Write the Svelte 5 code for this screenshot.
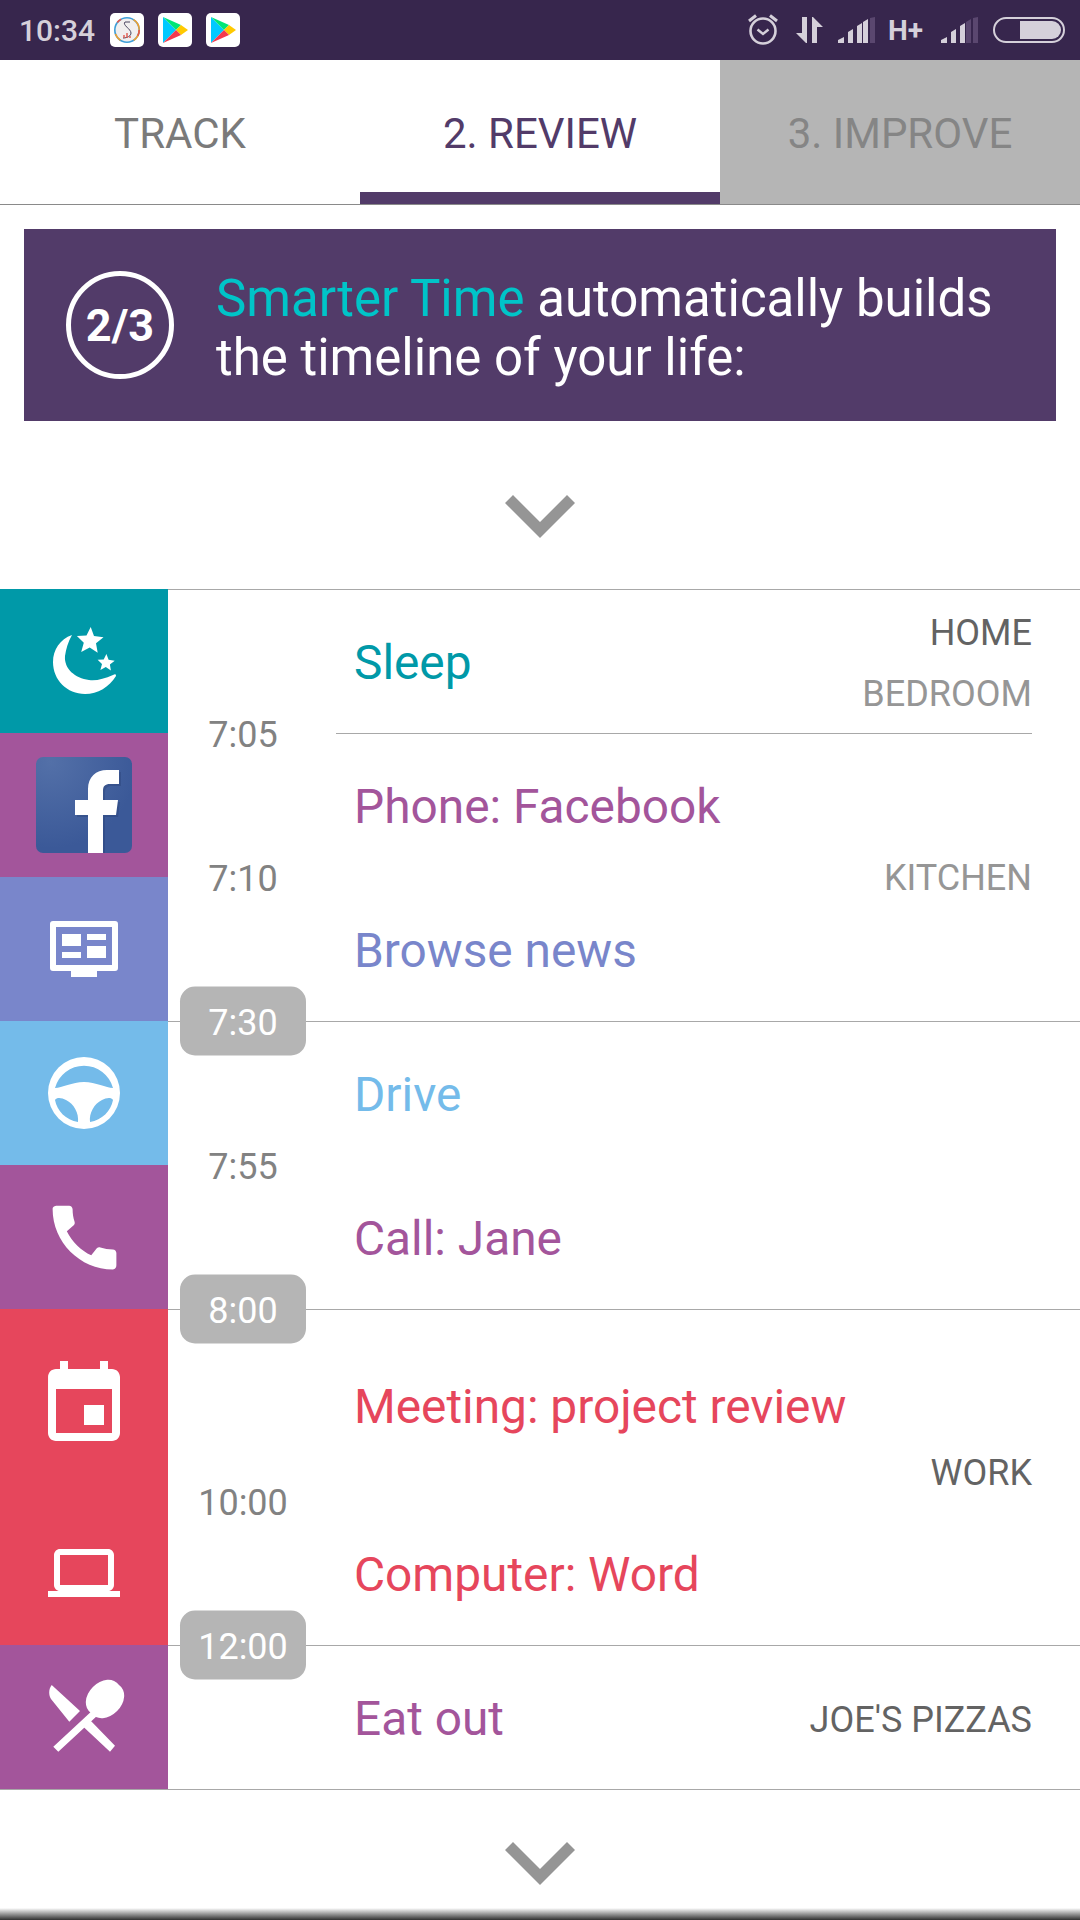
<script>
  function star(cx, cy, r) {
    let d = "";
    for (let i = 0; i < 10; i++) {
      const rad = i % 2 ? r * 0.46 : r;
      const a = (Math.PI / 5) * i - Math.PI / 2 + 0.05;
      d += (i ? "L" : "M") + (cx + rad * Math.cos(a)).toFixed(1) + " " + (cy + rad * Math.sin(a)).toFixed(1);
    }
    return d + "Z";
  }

  const icons = {
    moon: {
      vb: 96, size: 96,
      d: "M36 22C24 26 17 37 17 49C17 67 31 81 49 81C62 81 73 74 80 63C80 61 79 61 77 62C68 66 60 68 53 67C39 65 28 56 29 43C30 36 32 29 36 22Z" + star(54, 28, 14) + star(70, 50, 9)
    },
    news: {
      vb: 96, size: 96,
      d: "M17 20H79Q82 20 82 23V67Q82 70 79 70H61V76H35V70H17Q14 70 14 67V23Q14 20 17 20ZM20 26V64H76V26ZM26 33H45V45H26ZM51 33H70V39H51ZM26 51H45V57H26ZM51 45H70V57H51Z"
    },
    wheel: {
      vb: 96, size: 96,
      d: "M12 48A36 36 0 1 1 84 48A36 36 0 1 1 12 48ZM19 43C26 43 36 37 48 37C60 37 70 43 77 43A30 30 0 0 0 19 43ZM19 55C21 52 26 53 30 55C38 59 43 68 42 77C30 75 21 66 19 55ZM77 55C75 52 70 53 66 55C58 59 53 68 54 77C66 75 75 66 77 55Z"
    },
    phone: {
      vb: 24, size: 85,
      d: "M20.01 15.38c-1.23 0-2.42-.2-3.53-.56-.35-.12-.74-.03-1.01.24l-1.57 1.97c-2.83-1.35-5.48-3.9-6.89-6.83l1.95-1.66c.27-.28.35-.67.24-1.02-.37-1.11-.56-2.3-.56-3.53 0-.54-.45-.99-.99-.99H4.19C3.65 3 3 3.24 3 3.99 3 13.28 10.73 21 20.01 21c.71 0 .99-.63.99-1.18v-3.45c0-.54-.45-.99-.99-.99z"
    },
    event: {
      vb: 24, size: 96,
      d: "M17 12h-5v5h5v-5zM16 1v2H8V1H6v2H5c-1.11 0-1.99.9-1.99 2L3 19c0 1.1.89 2 2 2h14c1.1 0 2-.9 2-2V5c0-1.1-.9-2-2-2h-1V1h-2zm3 18H5V8h14v11z"
    },
    laptop: {
      vb: 24, size: 72,
      d: "M20 18c1.1 0 1.99-.9 1.99-2L22 6c0-1.1-.9-2-2-2H4c-1.1 0-2 .9-2 2v10c0 1.1.9 2 2 2H0v2h24v-2h-4zM4 6h16v10H4V6z"
    },
    food: {
      vb: 96, size: 96, rule: "nonzero",
      d: "M15.7 16C12.5 20 12.5 26 15 30L33.3 52.7L44 42ZM47.3 57.7L54 51L79 76.7L74 82.7ZM17.3 77.7L58 40L62 46L22.3 82.7ZM83 16A20 15 -45 1 1 55 44A20 15 -45 1 1 83 16Z"
    }
  };

  const groups = [
    { rows: [{ title: "Sleep", color: "#0099a8", icon: "moon", time: "7:05" }], places: [{ text: "HOME", dark: true }, { text: "BEDROOM" }] },
    {
      inner: true,
      rows: [
        { title: "Phone: Facebook", color: "#a3559b", icon: "fb", time: "7:10" },
        { title: "Browse news", color: "#7986cb", icon: "news", time: "7:30", pill: true }
      ],
      places: [{ text: "KITCHEN", nudge: "small" }]
    },
    {
      rows: [
        { title: "Drive", color: "#74bbea", icon: "wheel", time: "7:55" },
        { title: "Call: Jane", color: "#a3559b", icon: "phone", time: "8:00", pill: true }
      ],
      places: []
    },
    {
      rows: [
        { title: "Meeting: project review", color: "#e6465c", icon: "event", time: "10:00", tall: true },
        { title: "Computer: Word", color: "#e6465c", icon: "laptop", time: "12:00", pill: true }
      ],
      places: [{ text: "WORK", dark: true, nudge: "large" }]
    },
    { rows: [{ title: "Eat out", color: "#a3559b", icon: "food" }], places: [{ text: "JOE'S PIZZAS", dark: true }] }
  ];
</script>

{#snippet chevron()}
  <svg class="chevron" width="70" height="43" viewBox="0 0 70 43"><path d="M8 0L0 8L35 43L70 8L62 0L35 27Z" /></svg>
{/snippet}

{#snippet play()}
  <span class="app">
    <svg width="34" height="34" viewBox="0 0 34 34">
      <path fill="#00c9ff" d="M5 4V30L18 17Z" />
      <path fill="#00e676" d="M5 4L18 17L23 12Z" />
      <path fill="#ffc900" d="M23 12L30 17L23 22L18 17Z" />
      <path fill="#f5394d" d="M5 30L18 17L23 22Z" />
    </svg>
  </span>
{/snippet}

<div class="page">
  <header class="status">
    <span class="clock">10:34</span>
    <span class="app">
      <svg width="34" height="34" viewBox="0 0 34 34">
        <circle cx="17" cy="17" r="12" fill="#f1efef" />
        <circle cx="17" cy="17" r="12.2" fill="none" stroke="#3f9fd8" stroke-width="1.6" />
        <circle cx="17" cy="17" r="12.2" fill="none" stroke="#f2a02c" stroke-width="1.6" stroke-dasharray="12 14 8 30" />
        <circle cx="17" cy="17" r="12.2" fill="none" stroke="#e2574c" stroke-width="1.6" stroke-dasharray="6 40 5 40" />
        <path d="M20 9H15C12 12 21 16 21 20C21 23 17 25 13 25" fill="none" stroke="#4a4560" stroke-width="1" />
        <path d="M14 25V22M17 25V20M20 25V23" stroke="#e2574c" stroke-width="1.4" />
      </svg>
    </span>
    {@render play()}
    {@render play()}

    <div class="sys">
      <svg class="alarm" width="34" height="34" viewBox="0 0 34 34" fill="none" stroke="#d5d0da">
        <circle cx="17" cy="19" r="12.5" stroke-width="2.6" />
        <path d="M11.5 17.5L17 22L22.5 17.5" stroke-width="2.4" />
        <path d="M3 9L10 3.5M31 9L24 3.5" stroke-width="3" />
      </svg>
      <svg class="updown" width="27" height="26" viewBox="0 0 27 26" fill="#d5d0da">
        <path d="M0 16H6V0H11V26H10Z" />
        <path d="M16 26V0H17L27 10H21V26Z" />
      </svg>
      <svg class="signal" width="37" height="26" viewBox="0 0 37 26">
        <path fill="#d5d0da" d="M0 26V23L6 20V26ZM10 26V15L15 12V26ZM19 26V9L24 6V26ZM25 26V5L30 2V26Z" />
        <path fill="#5a476f" d="M32 26V1L37 0V26Z" />
      </svg>
      <span class="hplus">H+</span>
      <svg class="signal" width="37" height="26" viewBox="0 0 37 26">
        <path fill="#d5d0da" d="M0 26V23L6 20V26ZM10 26V15L15 12V26ZM19 26V9L24 6V26Z" />
        <path fill="#5a476f" d="M25 26V5L30 2V26ZM32 26V1L37 0V26Z" />
      </svg>
      <span class="battery"><span class="charge"></span></span>
    </div>
  </header>

  <nav class="tabs">
    <div class="tab">TRACK</div>
    <div class="tab active">2. REVIEW</div>
    <div class="tab locked">3. IMPROVE</div>
  </nav>

  <section class="banner">
    <div class="step">2/3</div>
    <p><span class="brand">Smarter Time</span> automatically builds<br />the timeline of your life:</p>
  </section>

  <div class="more top">{@render chevron()}</div>

  <main class="timeline">
    {#each groups as group}
      <div class="group" class:inner={group.inner}>
        <div class="rows">
          {#each group.rows as row}
            <div class="row" class:tall={row.tall}>
              <div class="icon" style="background: {row.color}">
                {#if row.icon === "fb"}
                  <svg width="96" height="96" viewBox="0 0 96 96">
                    <defs>
                      <radialGradient id="fbg" cx="0.15" cy="0.05" r="0.9">
                        <stop offset="0" stop-color="#5370a8" />
                        <stop offset="1" stop-color="#3b5998" />
                      </radialGradient>
                    </defs>
                    <rect width="96" height="96" rx="7" fill="url(#fbg)" />
                    <path d="M54 96V60H41V45H54V34C54 22 62 15 73 15H85V29H76C71 29 69 31 69 36V45H84L82 60H69V96Z" fill="#1d2f5f" opacity="0.25" />
                    <path d="M52 96V58H39V43H52V32C52 20 60 13 71 13H83V27H74C69 27 67 29 67 34V43H82L80 58H67V96Z" fill="#fff" />
                  </svg>
                {:else}
                  <svg width={icons[row.icon].size} height={icons[row.icon].size} viewBox="0 0 {icons[row.icon].vb} {icons[row.icon].vb}">
                    <path d={icons[row.icon].d} fill="#fff" fill-rule={icons[row.icon].rule ?? "evenodd"} />
                  </svg>
                {/if}
              </div>
              <div class="title" style="color: {row.color}">{row.title}</div>
              {#if row.time}
                <div class="time" class:pill={row.pill}>{row.time}</div>
              {/if}
            </div>
          {/each}
        </div>
        <div class="places">
          {#each group.places as place}
            <div class="place {place.nudge ?? ''}" class:dark={place.dark}>{place.text}</div>
          {/each}
        </div>
      </div>
    {/each}
  </main>

  <footer class="foot">
    {@render chevron()}
    <div class="edge"></div>
  </footer>
</div>

<style>
  :global(body) {
    margin: 0;
    background: #fff;
  }

  .page {
    width: 1080px;
    height: 1920px;
    overflow: hidden;
    display: flex;
    flex-direction: column;
    font-family: Roboto, "Liberation Sans", sans-serif;
    background: #fff;
  }

  .status {
    height: 60px;
    flex: none;
    background: #37264d;
    display: flex;
    align-items: center;
    padding-left: 19px;
    color: #d5d0da;
  }

  .clock {
    font-size: 30px;
    font-weight: 500;
    width: 91px;
  }

  .app {
    width: 34px;
    height: 34px;
    margin-right: 14px;
    background: #fff;
    border-radius: 5px;
    display: block;
  }

  .app svg {
    display: block;
  }

  .sys {
    margin-left: auto;
    margin-right: 15px;
    display: flex;
    align-items: center;
  }

  .alarm {
    margin-right: 16px;
    margin-top: -2px;
  }

  .updown {
    margin-right: 15px;
  }

  .hplus {
    font-size: 28px;
    font-weight: 700;
    width: 36px;
    margin: 0 17px 0 13px;
  }

  .battery {
    width: 72px;
    height: 26px;
    margin-left: 15px;
    box-sizing: border-box;
    border: 2.5px solid #d5d0da;
    border-radius: 13px;
    padding: 2px 2px 2px 25px;
    display: block;
  }

  .charge {
    display: block;
    height: 100%;
    background: #d5d0da;
    border-radius: 0 9px 9px 0;
  }

  .tabs {
    height: 145px;
    flex: none;
    display: flex;
    box-sizing: border-box;
    border-bottom: 1px solid #8a8a8a;
  }

  .tab {
    flex: 1;
    display: flex;
    align-items: center;
    justify-content: center;
    font-size: 42px;
    color: #7a7a7a;
    padding-top: 3px;
  }

  .tab.active {
    color: #523b69;
    border-bottom: 12px solid #523b69;
    padding-top: 15px;
  }

  .tab.locked {
    background: #b5b5b5;
    color: #858585;
  }

  .banner {
    height: 192px;
    flex: none;
    margin: 24px 24px 0;
    background: #523b69;
    display: flex;
    align-items: center;
    padding-left: 42px;
    color: #fff;
  }

  .step {
    width: 108px;
    height: 108px;
    box-sizing: border-box;
    border: 5px solid #fff;
    border-radius: 50%;
    display: flex;
    align-items: center;
    justify-content: center;
    font-size: 45px;
    font-weight: 700;
    margin-right: 42px;
  }

  .banner p {
    margin: 0;
    font-size: 51px;
    line-height: 59px;
    padding-top: 6px;
  }

  .brand {
    color: #00c4c8;
  }

  .more {
    height: 168px;
    flex: none;
    box-sizing: border-box;
    padding-top: 74px;
    display: flex;
    justify-content: center;
  }

  .chevron {
    fill: #959595;
    display: block;
  }

  .group {
    position: relative;
    display: grid;
    grid-template-columns: 1fr auto;
  }

  .group::before {
    content: "";
    position: absolute;
    top: 0;
    left: 168px;
    right: 0;
    height: 1px;
    background: #a8a8a8;
  }

  .group.inner::before {
    left: 336px;
    right: 48px;
  }

  .row {
    position: relative;
    height: 144px;
    display: flex;
    align-items: center;
  }

  .row.tall {
    height: 192px;
  }

  .icon {
    width: 168px;
    height: 100%;
    flex: none;
    display: flex;
    align-items: center;
    justify-content: center;
  }

  .title {
    font-size: 47.8px;
    margin-left: 186px;
    padding-top: 3px;
    white-space: nowrap;
  }

  .time {
    position: absolute;
    left: 180px;
    bottom: 0;
    transform: translateY(50%);
    width: 126px;
    height: 69px;
    z-index: 1;
    display: flex;
    align-items: center;
    justify-content: center;
    font-size: 36px;
    padding-top: 3px;
    box-sizing: border-box;
    color: #828282;
  }

  .time.pill {
    background: #b5b5b5;
    border-radius: 15px;
    color: #fff;
  }

  .places {
    display: flex;
    flex-direction: column;
    align-items: flex-end;
    justify-content: center;
    padding: 6px 48px 0 0;
  }

  .place {
    font-size: 36px;
    line-height: 61px;
    color: #969696;
  }

  .place.dark {
    color: #636363;
  }

  .place.small {
    margin-bottom: 4px;
  }

  .place.large {
    margin-bottom: 14px;
  }

  .foot {
    flex: 1;
    display: flex;
    flex-direction: column;
    align-items: center;
    border-top: 1px solid #a8a8a8;
    padding-top: 52px;
  }

  .edge {
    margin-top: auto;
    align-self: stretch;
    height: 12px;
    background: linear-gradient(#fff, #303030);
  }
</style>
